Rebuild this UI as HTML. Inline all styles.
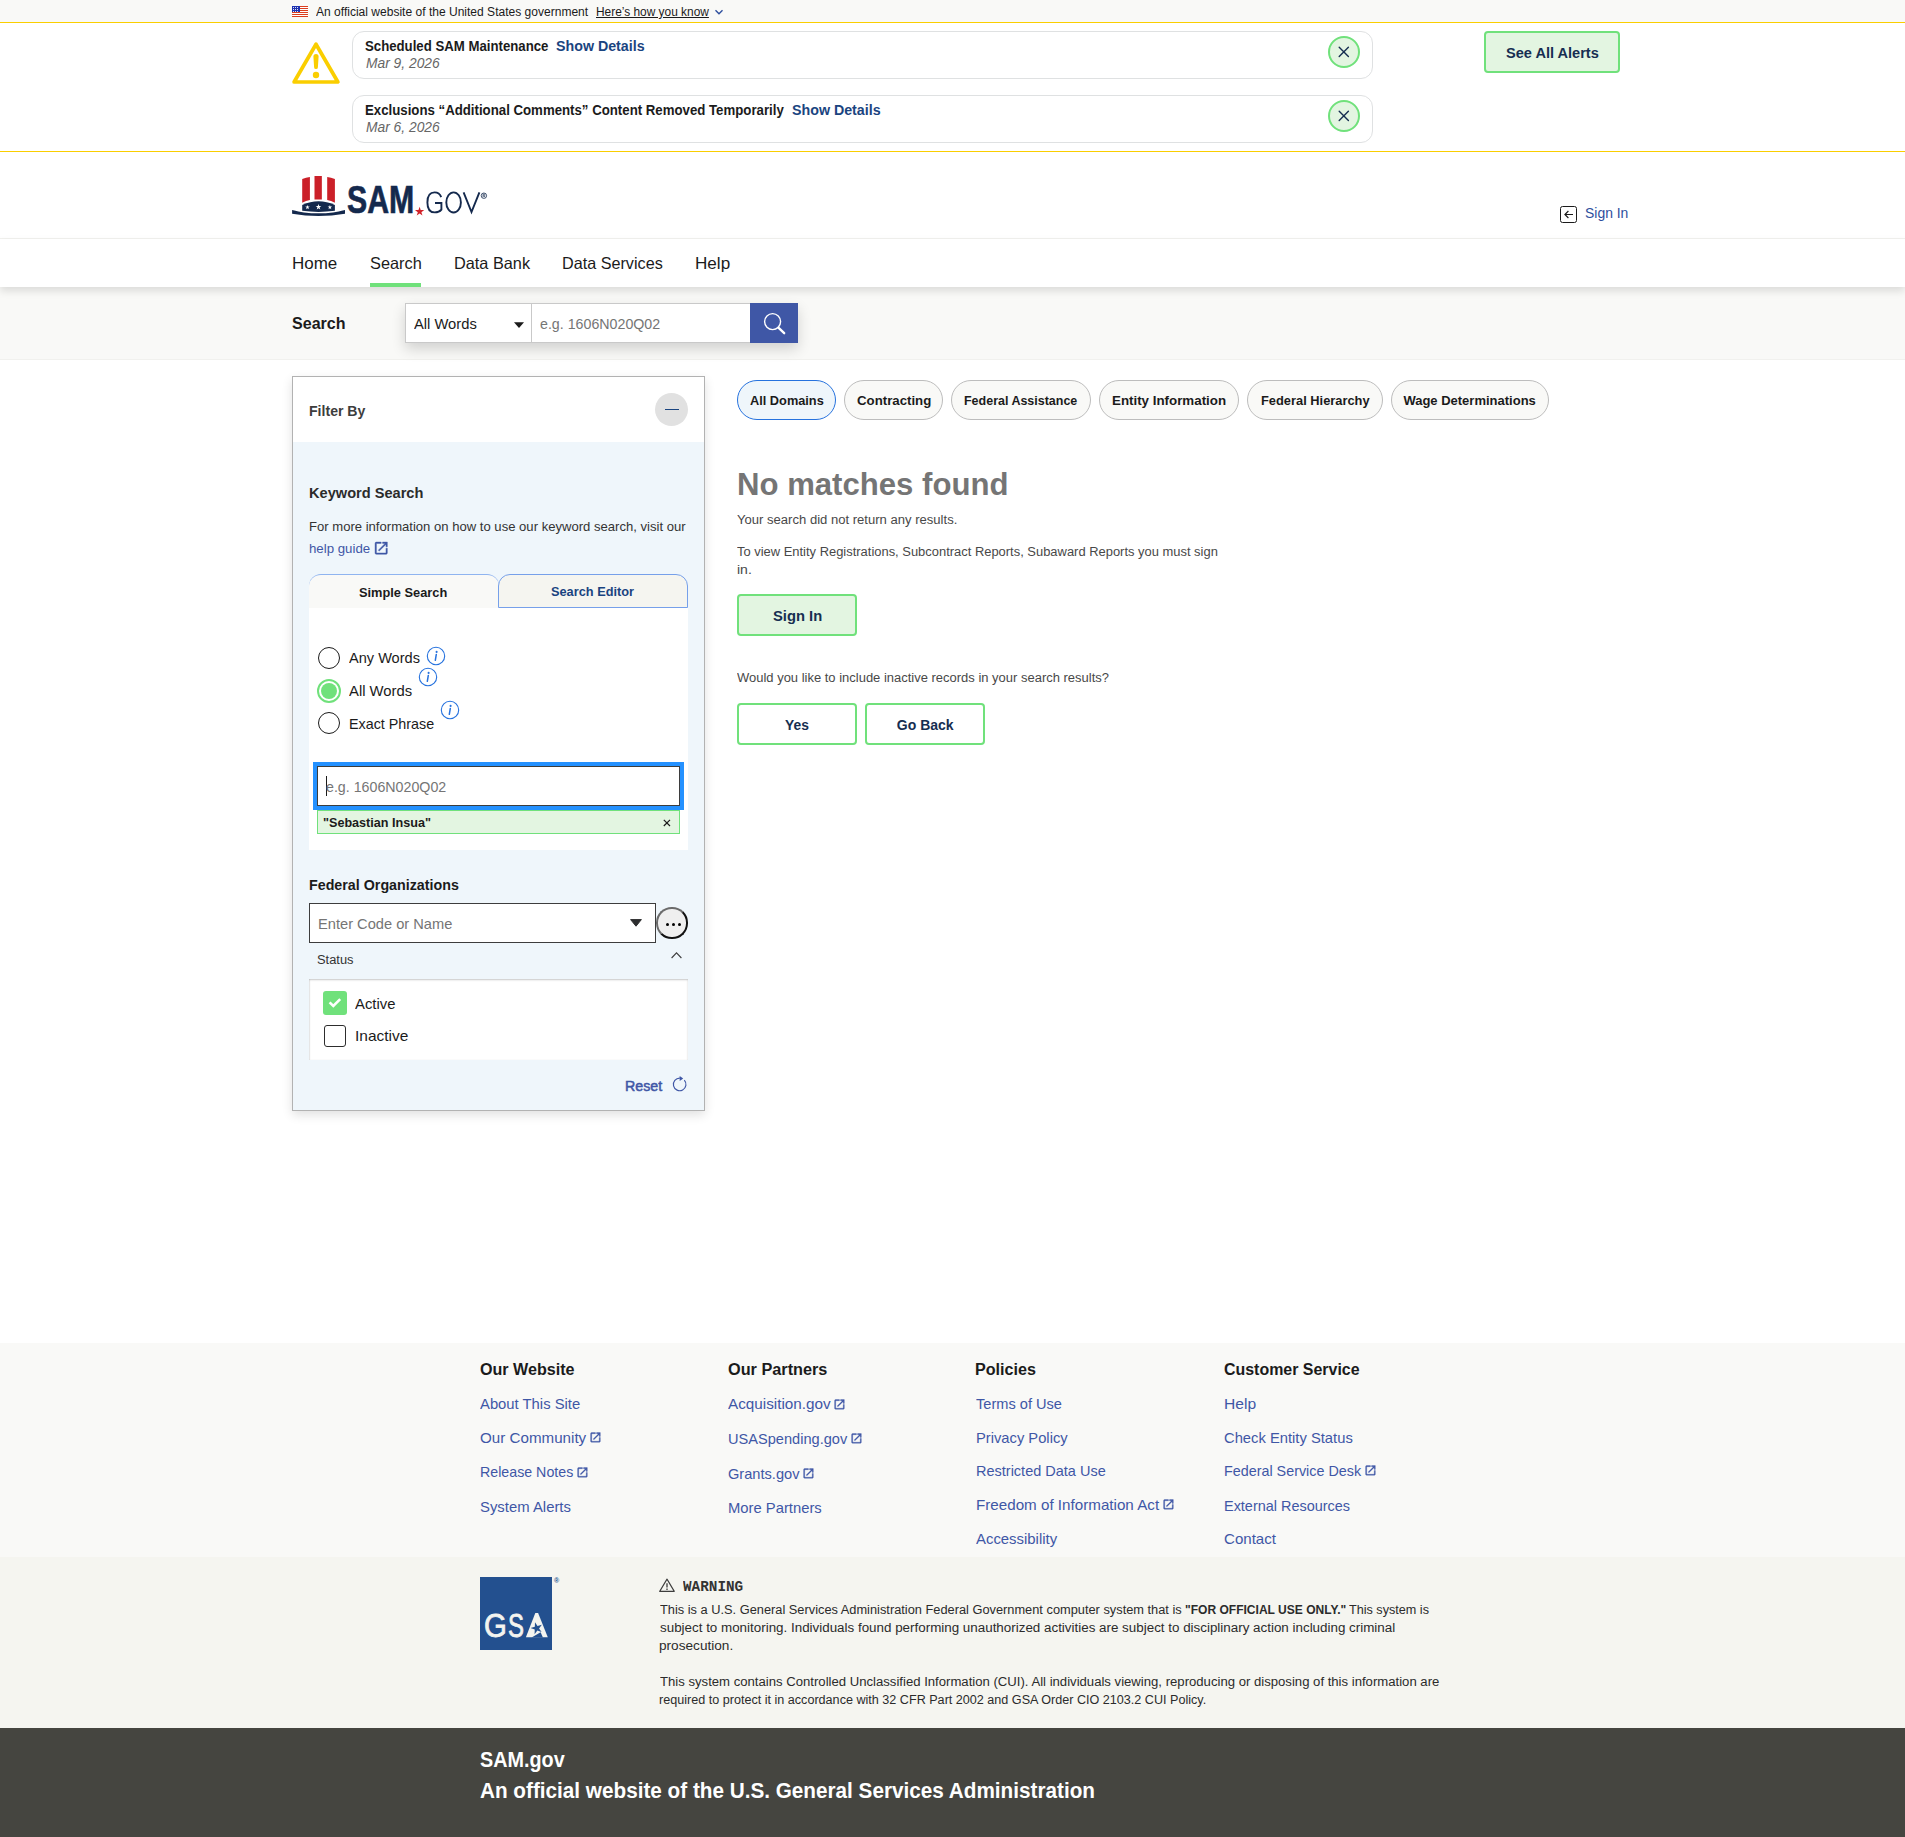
<!DOCTYPE html>
<html lang="en"><head><meta charset="utf-8"><title>SAM.gov | Search</title><style>
*{box-sizing:border-box;margin:0;padding:0}
html,body{width:1905px;height:1837px;overflow:hidden;background:#fff}
body{position:relative;font-family:"Liberation Sans",sans-serif;color:#1b1b1b;font-size:16px}
.b{position:absolute;display:block}
.t{position:absolute;display:block;white-space:nowrap;line-height:1;transform-origin:0 0}
</style></head>
<body>
<header>
<div class="b" style="left:0px;top:0px;width:1905px;height:22px;background:#f9f9f7"></div>
<div class="b" style="left:0px;top:22px;width:1905px;height:1px;background:#face00"></div>
<svg class="b" style="left:292px;top:6px" width="16" height="11" viewBox="0 0 16 11" shape-rendering="crispEdges"><rect width="16" height="11" fill="#fff"/><rect y="0" width="16" height="1" fill="#db3e1f"/><rect y="2" width="16" height="1" fill="#db3e1f"/><rect y="4" width="16" height="1" fill="#db3e1f"/><rect y="6" width="16" height="1" fill="#db3e1f"/><rect y="8" width="16" height="1" fill="#db3e1f"/><rect y="10" width="16" height="1" fill="#db3e1f"/><rect width="8" height="6" fill="#1e33b1"/><rect x="1" y="1" width="1" height="1" fill="#fff" opacity=".85"/><rect x="3" y="1" width="1" height="1" fill="#fff" opacity=".85"/><rect x="5" y="1" width="1" height="1" fill="#fff" opacity=".85"/><rect x="1" y="3" width="1" height="1" fill="#fff" opacity=".85"/><rect x="3" y="3" width="1" height="1" fill="#fff" opacity=".85"/><rect x="5" y="3" width="1" height="1" fill="#fff" opacity=".85"/><rect x="1" y="5" width="1" height="1" fill="#fff" opacity=".85"/><rect x="3" y="5" width="1" height="1" fill="#fff" opacity=".85"/><rect x="5" y="5" width="1" height="1" fill="#fff" opacity=".85"/></svg>
<span class="t" style="left:315.87px;top:6px;font-size:12px;transform:scaleX(1.0033);">An official website of the United States government</span>
<span class="t" style="left:595.92px;top:6px;font-size:12px;transform:scaleX(0.9917);text-decoration:underline;text-underline-offset:0.8px;">Here’s how you know</span>
<svg class="b" style="left:714px;top:8px" width="10" height="8" viewBox="0 0 10 8"><path d="M1.5 2.2 5 5.7 8.5 2.2" fill="none" stroke="#2e4f9e" stroke-width="1.4"/></svg>
<div class="b" style="left:0px;top:151px;width:1905px;height:1px;background:#face00"></div>
<svg class="b" style="left:290px;top:40px" width="52" height="46" viewBox="0 0 52 46"><path d="M26 4.2 47.9 42H4.1Z" fill="none" stroke="#face00" stroke-width="3.7" stroke-linejoin="round"/><path d="M23.4 16.6a2.6 2.6 0 0 1 5.2 0l-.7 10.6a1.9 1.9 0 0 1-3.8 0z" fill="#face00"/><circle cx="26" cy="35" r="3.2" fill="#face00"/></svg>
<div class="b" style="left:352px;top:31px;width:1021px;height:48px;border:1px solid #dfe1e2;border-radius:12px;background:#fff"></div>
<span class="t" style="left:365.17px;top:39px;font-size:14px;transform:scaleX(0.9429);font-weight:700;">Scheduled SAM Maintenance</span>
<a class="t" style="left:556.32px;top:39px;font-size:14px;transform:scaleX(1.0169);font-weight:700;color:#1a4480;">Show Details</a>
<span class="t" style="left:365.77px;top:56px;font-size:14px;transform:scaleX(0.9863);font-style:italic;color:#666;">Mar 9, 2026</span>
<div class="b" style="left:1328px;top:36px;width:32px;height:32px;border:2px solid #70e17b;border-radius:50%;background:#e3f5e1"></div>
<svg class="b" style="left:1337px;top:45px" width="14" height="14" viewBox="0 0 14 14"><path d="M2.2 2.2 11.4 11.4M11.4 2.2 2.2 11.4" stroke="#162e51" stroke-width="1.4" stroke-linecap="round"/></svg>
<div class="b" style="left:352px;top:95px;width:1021px;height:48px;border:1px solid #dfe1e2;border-radius:12px;background:#fff"></div>
<span class="t" style="left:365.31px;top:103px;font-size:14px;transform:scaleX(0.9450);font-weight:700;">Exclusions “Additional Comments” Content Removed Temporarily</span>
<a class="t" style="left:791.64px;top:103px;font-size:14px;transform:scaleX(1.0169);font-weight:700;color:#1a4480;">Show Details</a>
<span class="t" style="left:365.77px;top:120px;font-size:14px;transform:scaleX(0.9863);font-style:italic;color:#666;">Mar 6, 2026</span>
<div class="b" style="left:1328px;top:100px;width:32px;height:32px;border:2px solid #70e17b;border-radius:50%;background:#e3f5e1"></div>
<svg class="b" style="left:1337px;top:109px" width="14" height="14" viewBox="0 0 14 14"><path d="M2.2 2.2 11.4 11.4M11.4 2.2 2.2 11.4" stroke="#162e51" stroke-width="1.4" stroke-linecap="round"/></svg>
<div class="b" style="left:1484px;top:31px;width:136px;height:42px;border:2px solid #70e17b;border-radius:4px;background:#e3f5e1"></div>
<span class="t" style="left:1506.11px;top:46px;font-size:14px;transform:scaleX(1.0398);font-weight:700;color:#162e51;">See All Alerts</span>
<div class="b" style="left:0px;top:238px;width:1905px;height:1px;background:#f2f2ef"></div>
<svg class="b" style="left:288px;top:170px" width="204" height="50" viewBox="288 170 204 50"><path d="M302.2 179 Q306 177.6 309.9 177 V200 Q306 200.9 302.2 202.7Z" fill="#cb2029"/><path d="M314.5 176.1 H321.85 V199.6 Q318.2 199.3 314.5 199.6Z" fill="#cb2029"/><path d="M327.2 177 Q331 177.6 334.9 179 V202.7 Q331 200.9 327.2 200Z" fill="#cb2029"/><path d="M302.2 205 Q318.5 197.5 334.9 205 V210.8 Q318.5 213 302.2 210.8Z" fill="#14294d"/><path d="M292.1 209.9 C297 211 300 211.8 304 212.4 Q318.5 214.2 333 212.4 C337 211.8 340 211 345 209.9 V213.75 Q318.5 218.2 292.1 213.75Z" fill="#14294d"/><path transform="translate(307.5 207.3) scale(2.4)" d="M0-1 .225-.309H.951L.363.118.588.809 0 .382-.588.809-.363.118-.951-.309H-.225Z" fill="#fff"/><path transform="translate(318.5 207.0) scale(3.0)" d="M0-1 .225-.309H.951L.363.118.588.809 0 .382-.588.809-.363.118-.951-.309H-.225Z" fill="#fff"/><path transform="translate(329.9 207.3) scale(2.4)" d="M0-1 .225-.309H.951L.363.118.588.809 0 .382-.588.809-.363.118-.951-.309H-.225Z" fill="#fff"/><path transform="translate(419.6 211.6) scale(4.9)" d="M0-1 .225-.309H.951L.363.118.588.809 0 .382-.588.809-.363.118-.951-.309H-.225Z" fill="#d2232a"/><g fill="none" stroke="#14294d" stroke-width="1.9"><path d="M441.2 197.1 Q439.4 192.4 434.6 192.4 Q427.4 192.4 427.4 202.4 Q427.4 212.4 434.8 212.4 Q439.2 212.4 441.4 209.6 V203 H435"/><ellipse cx="453.6" cy="202.4" rx="7.3" ry="10.05"/><path d="M463.6 192.3 471.5 212 479.4 192.3"/></g><circle cx="483.9" cy="195.7" r="2.7" fill="none" stroke="#14294d" stroke-width="0.8"/><path d="M483 197.2v-3h1.1c.65 0 1 .35 1 .85s-.35.85-1 .85h-1.1m1.1 0 .95 1.3" fill="none" stroke="#14294d" stroke-width="0.65"/></svg>
<span class="t" style="left:347.24px;top:181px;font-size:38.3px;transform:scaleX(0.7892);font-weight:700;color:#14294d;-webkit-text-stroke:0.7px #14294d;">SAM</span>
<div class="b" style="left:1560px;top:206px;width:17px;height:17px;border:1.3px solid #1b1b1b;border-radius:2.5px"></div>
<svg class="b" style="left:1563px;top:209px" width="12" height="11" viewBox="0 0 12 11"><path d="M10 5.5H2.2M5.4 2 1.9 5.5 5.4 9" fill="none" stroke="#1b1b1b" stroke-width="1.15"/></svg>
<a class="t" style="left:1585.01px;top:206px;font-size:14.5px;transform:scaleX(0.9603);color:#2e4f9e;">Sign In</a>
</header><nav>
<div class="b" style="left:0px;top:239px;width:1905px;height:48px;background:#fff;box-shadow:0 4px 8px rgba(0,0,0,.12);z-index:3"></div>
<a class="t" style="left:292.43px;top:255px;font-size:16.5px;transform:scaleX(1.0290);z-index:4;">Home</a>
<a class="t" style="left:370.03px;top:255px;font-size:16.5px;transform:scaleX(0.9893);z-index:4;">Search</a>
<a class="t" style="left:453.75px;top:255px;font-size:16.5px;transform:scaleX(0.9870);z-index:4;">Data Bank</a>
<a class="t" style="left:562.26px;top:255px;font-size:16.5px;transform:scaleX(0.9809);z-index:4;">Data Services</a>
<a class="t" style="left:695.18px;top:255px;font-size:16.5px;transform:scaleX(1.0358);z-index:4;">Help</a>
<div class="b" style="left:370px;top:283px;width:51px;height:4px;background:#70e17b;z-index:4"></div>
</nav><section>
<div class="b" style="left:0px;top:287px;width:1905px;height:73px;background:#f9f9f7;border-bottom:1px solid #f1f1ee"></div>
<span class="t" style="left:291.88px;top:316px;font-size:16px;transform:scaleX(1.0032);font-weight:700;">Search</span>
<div class="b" style="left:405px;top:303px;width:393px;height:40px;box-shadow:0 6px 14px rgba(0,0,0,.16)"></div>
<div class="b" style="left:405px;top:303px;width:127px;height:40px;background:#fff;border:1px solid #c9c9c9"></div>
<div class="b" style="left:531px;top:303px;width:220px;height:40px;background:#fff;border:1px solid #c9c9c9"></div>
<span class="t" style="left:414.32px;top:316px;font-size:15px;transform:scaleX(0.9827);">All Words</span>
<svg class="b" style="left:513px;top:321px" width="12" height="8" viewBox="0 0 12 8"><path d="M1 1.2h10L6 7Z" fill="#1b1b1b"/></svg>
<span class="t" style="left:539.85px;top:316px;font-size:15px;transform:scaleX(0.9481);color:#757575;">e.g. 1606N020Q02</span>
<div class="b" style="left:750px;top:303px;width:48px;height:40px;background:#3f57a6"></div>
<svg class="b" style="left:750px;top:303px" width="48" height="40" viewBox="750 303 48 40"><circle cx="772.6" cy="321.6" r="8" fill="none" stroke="#fff" stroke-width="1.4"/><path d="M778.4 327.6 784.2 333.2" stroke="#fff" stroke-width="2.3" stroke-linecap="round"/></svg>
</section>
<main><aside>
<div class="b" style="left:292px;top:376px;width:413px;height:735px;background:#eff6fb;border:1px solid #b2b2b2;box-shadow:0 4px 10px rgba(0,0,0,.12)"></div>
<div class="b" style="left:293px;top:377px;width:411px;height:65px;background:#fff"></div>
<h2 class="t" style="left:309.18px;top:403px;font-size:15px;transform:scaleX(0.9396);font-weight:700;color:#3d3d3d;">Filter By</h2>
<div class="b" style="left:655px;top:393px;width:33px;height:33px;background:#e1e1e1;border-radius:50%"></div>
<div class="b" style="left:665px;top:408.5px;width:14px;height:1.2px;background:#1a4480"></div>
<span class="t" style="left:309.25px;top:485px;font-size:15px;transform:scaleX(0.9731);font-weight:700;color:#2b2b2b;">Keyword Search</span>
<span class="t" style="left:309.10px;top:520px;font-size:13px;transform:scaleX(1.0061);color:#333;">For more information on how to use our keyword search, visit our</span>
<a class="t" style="left:309.11px;top:542px;font-size:13px;transform:scaleX(1.0196);color:#3f57a6;">help guide</a>
<svg class="b" style="left:372.85px;top:540.35px" width="16.40" height="16.40" viewBox="0 0 24 24"><path fill="#3f57a6" stroke="#3f57a6" stroke-width=".6" d="M19 19H5V5h7V3H5a2 2 0 0 0-2 2v14a2 2 0 0 0 2 2h14c1.1 0 2-.9 2-2v-7h-2v7zM14 3v2h3.59l-9.83 9.83 1.41 1.41L19 6.41V10h2V3h-7z"/></svg>
<div class="b" style="left:309px;top:574px;width:190px;height:35px;background:#f9f9f7;border-top:1px solid #8fb4f0;border-radius:12px 12px 0 0"></div>
<div class="b" style="left:498px;top:574px;width:190px;height:34px;background:#f5f5f0;border:1px solid #76a0ea;border-radius:12px 12px 0 0"></div>
<span class="t" style="left:359.46px;top:586px;font-size:13.5px;transform:scaleX(0.9479);font-weight:700;">Simple Search</span>
<span class="t" style="left:551.27px;top:585px;font-size:13.5px;transform:scaleX(0.9458);font-weight:700;color:#1a4480;">Search Editor</span>
<div class="b" style="left:309px;top:608px;width:379px;height:242px;background:#fff"></div>
<div class="b" style="left:318px;top:647px;width:22px;height:22px;border:1.6px solid #1b1b1b;border-radius:50%;background:#fff"></div>
<div class="b" style="left:317px;top:679px;width:24px;height:24px;border:2px solid #70e17b;border-radius:50%;background:#fff"></div>
<div class="b" style="left:321px;top:683px;width:16px;height:16px;border-radius:50%;background:#70e17b"></div>
<div class="b" style="left:318px;top:712px;width:22px;height:22px;border:1.6px solid #1b1b1b;border-radius:50%;background:#fff"></div>
<span class="t" style="left:349.14px;top:651px;font-size:14.5px;transform:scaleX(1.0043);">Any Words</span>
<span class="t" style="left:348.79px;top:684px;font-size:14.5px;transform:scaleX(1.0217);">All Words</span>
<span class="t" style="left:348.68px;top:717px;font-size:14.5px;transform:scaleX(0.9870);">Exact Phrase</span>
<svg class="b" style="left:426.2px;top:646.2px" width="20" height="20" viewBox="0 0 20 20"><circle cx="10" cy="10" r="8.7" fill="none" stroke="#2672de" stroke-width="1.1"/><circle cx="10.6" cy="5.9" r="1.05" fill="#2672de"/><path d="M10.3 8.4 9.3 14.3" stroke="#2672de" stroke-width="1.5" stroke-linecap="round"/></svg>
<svg class="b" style="left:418.1px;top:667.2px" width="20" height="20" viewBox="0 0 20 20"><circle cx="10" cy="10" r="8.7" fill="none" stroke="#2672de" stroke-width="1.1"/><circle cx="10.6" cy="5.9" r="1.05" fill="#2672de"/><path d="M10.3 8.4 9.3 14.3" stroke="#2672de" stroke-width="1.5" stroke-linecap="round"/></svg>
<svg class="b" style="left:440.1px;top:700.1px" width="20" height="20" viewBox="0 0 20 20"><circle cx="10" cy="10" r="8.7" fill="none" stroke="#2672de" stroke-width="1.1"/><circle cx="10.6" cy="5.9" r="1.05" fill="#2672de"/><path d="M10.3 8.4 9.3 14.3" stroke="#2672de" stroke-width="1.5" stroke-linecap="round"/></svg>
<div class="b" style="left:313px;top:762px;width:371px;height:48px;background:#2491ff"></div>
<div class="b" style="left:317px;top:766px;width:363px;height:40px;background:#fff;border:1px solid #3d3d3d"></div>
<div class="b" style="left:326px;top:776px;width:1px;height:20px;background:#1b1b1b"></div>
<span class="t" style="left:325.69px;top:779px;font-size:15px;transform:scaleX(0.9487);color:#757575;">e.g. 1606N020Q02</span>
<div class="b" style="left:317px;top:810px;width:363px;height:24px;background:#e3f5e1;border:1px solid #70e17b"></div>
<span class="t" style="left:323.01px;top:816px;font-size:13px;transform:scaleX(0.9694);font-weight:700;">"Sebastian Insua"</span>
<svg class="b" style="left:662px;top:818px" width="10" height="10" viewBox="0 0 10 10"><path d="M1.8 1.8 8 8M8 1.8 1.8 8" stroke="#1b1b1b" stroke-width="1.2"/></svg>
<span class="t" style="left:308.86px;top:877px;font-size:15px;transform:scaleX(0.9513);font-weight:700;">Federal Organizations</span>
<div class="b" style="left:309px;top:903px;width:347px;height:40px;background:#fff;border:1px solid #3d3d3d"></div>
<span class="t" style="left:318.40px;top:916px;font-size:15px;transform:scaleX(0.9764);color:#757575;">Enter Code or Name</span>
<svg class="b" style="left:629px;top:918px" width="14" height="10" viewBox="0 0 14 10"><path d="M1.6 1.6h10.8L7 8.2Z" fill="#2d2e2f" stroke="#2d2e2f" stroke-width="1" stroke-linejoin="round"/></svg>
<div class="b" style="left:656.4px;top:907.2px;width:31.5px;height:31.5px;background:#efefef;border:2px solid #1b1b1b;border-color:#6b6b6b #111 #111 #6b6b6b;border-radius:50%"></div>
<div class="b" style="left:665.6999999999999px;top:922.6px;width:3.2px;height:3.2px;background:#000;border-radius:50%"></div>
<div class="b" style="left:671.6999999999999px;top:922.6px;width:3.2px;height:3.2px;background:#000;border-radius:50%"></div>
<div class="b" style="left:677.6999999999999px;top:922.6px;width:3.2px;height:3.2px;background:#000;border-radius:50%"></div>
<span class="t" style="left:317.30px;top:954px;font-size:12.5px;transform:scaleX(1.0309);color:#333;">Status</span>
<svg class="b" style="left:669px;top:950px" width="15" height="10" viewBox="0 0 15 10"><path d="M2.6 8 7.5 2.9 12.4 8" fill="none" stroke="#3d3d3d" stroke-width="1.1"/></svg>
<div class="b" style="left:309px;top:979px;width:379px;height:81px;background:#fff;box-shadow:inset 0 1px 2px rgba(0,0,0,.22),inset 1px 0 1px rgba(0,0,0,.05)"></div>
<div class="b" style="left:323px;top:991px;width:24px;height:24px;background:#70e17b;border-radius:3px"></div>
<svg class="b" style="left:323px;top:991px" width="24" height="24" viewBox="0 0 24 24"><path d="M6.6 11.4 10.3 14.9 17.2 8.1" fill="none" stroke="#fff" stroke-width="2.6"/></svg>
<div class="b" style="left:324px;top:1025px;width:22px;height:22px;background:#fff;border:1.6px solid #2d2d2d;border-radius:3px"></div>
<span class="t" style="left:355.05px;top:996px;font-size:15px;transform:scaleX(0.9900);">Active</span>
<span class="t" style="left:354.78px;top:1028px;font-size:15px;transform:scaleX(1.0312);">Inactive</span>
<span class="t" style="left:625.33px;top:1079px;font-size:14.5px;transform:scaleX(0.9807);color:#3f57a6;-webkit-text-stroke:0.5px #3f57a6;">Reset</span>
<svg class="b" style="left:670px;top:1074px" width="20" height="20" viewBox="0 0 20 20"><path d="M14.3 6.1 A6.3 6.3 0 1 1 9.9 4.1" fill="none" stroke="#3f57a6" stroke-width="1.15"/><path d="M9.7 2 13.2 4.5 9.7 6.9Z" fill="#3f57a6"/></svg>
</aside><section>
<div class="b" style="left:737px;top:380px;width:99px;height:40px;border:1px solid #2672de;border-radius:20px;background:#eff6fb"></div>
<span class="t" style="left:750.03px;top:394px;font-size:13px;transform:scaleX(0.9820);font-weight:700;">All Domains</span>
<div class="b" style="left:844px;top:380px;width:99px;height:40px;border:1px solid #bdbdbd;border-radius:20px;background:#f9f9f7"></div>
<span class="t" style="left:856.71px;top:394px;font-size:13px;transform:scaleX(1.0183);font-weight:700;">Contracting</span>
<div class="b" style="left:951px;top:380px;width:140px;height:40px;border:1px solid #bdbdbd;border-radius:20px;background:#f9f9f7"></div>
<span class="t" style="left:964.15px;top:394px;font-size:13px;transform:scaleX(0.9599);font-weight:700;">Federal Assistance</span>
<div class="b" style="left:1099px;top:380px;width:140px;height:40px;border:1px solid #bdbdbd;border-radius:20px;background:#f9f9f7"></div>
<span class="t" style="left:1112.33px;top:394px;font-size:13px;transform:scaleX(1.0257);font-weight:700;">Entity Information</span>
<div class="b" style="left:1247px;top:380px;width:136px;height:40px;border:1px solid #bdbdbd;border-radius:20px;background:#f9f9f7"></div>
<span class="t" style="left:1260.50px;top:394px;font-size:13px;transform:scaleX(0.9887);font-weight:700;">Federal Hierarchy</span>
<div class="b" style="left:1391px;top:380px;width:158px;height:40px;border:1px solid #bdbdbd;border-radius:20px;background:#f9f9f7"></div>
<span class="t" style="left:1403.38px;top:394px;font-size:13px;font-weight:700;">Wage Determinations</span>
<h1 class="t" style="left:737.02px;top:469px;font-size:31px;transform:scaleX(1.0039);font-weight:700;color:#757575;">No matches found</h1>
<span class="t" style="left:736.87px;top:514px;font-size:12.5px;transform:scaleX(1.0453);color:#484848;">Your search did not return any results.</span>
<span class="t" style="left:737.30px;top:546px;font-size:12.5px;transform:scaleX(1.0345);color:#484848;">To view Entity Registrations, Subcontract Reports, Subaward Reports you must sign</span>
<span class="t" style="left:737.20px;top:564px;font-size:12.5px;transform:scaleX(1.1209);color:#484848;">in.</span>
<div class="b" style="left:737px;top:594px;width:120px;height:42px;border:2px solid #70e17b;border-radius:4px;background:#e3f5e1"></div>
<span class="t" style="left:772.62px;top:609px;font-size:14px;transform:scaleX(1.0533);font-weight:700;color:#162e51;">Sign In</span>
<span class="t" style="left:737.31px;top:672px;font-size:12.5px;transform:scaleX(1.0382);color:#484848;">Would you like to include inactive records in your search results?</span>
<div class="b" style="left:737px;top:703px;width:120px;height:42px;border:2px solid #70e17b;border-radius:4px;background:#fff"></div>
<div class="b" style="left:865px;top:703px;width:120px;height:42px;border:2px solid #70e17b;border-radius:4px;background:#fff"></div>
<span class="t" style="left:785.22px;top:718px;font-size:14px;transform:scaleX(0.9868);font-weight:700;color:#162e51;">Yes</span>
<span class="t" style="left:896.81px;top:718px;font-size:14px;font-weight:700;color:#162e51;">Go Back</span>
</section></main><footer>
<div class="b" style="left:0px;top:1343px;width:1905px;height:214px;background:#f9f9f7"></div>
<div class="b" style="left:0px;top:1557px;width:1905px;height:171px;background:#f5f5f0"></div>
<div class="b" style="left:0px;top:1728px;width:1905px;height:109px;background:#454540"></div>
<h3 class="t" style="left:479.73px;top:1362px;font-size:16px;transform:scaleX(1.0066);font-weight:700;">Our Website</h3>
<h3 class="t" style="left:727.57px;top:1362px;font-size:16px;transform:scaleX(1.0161);font-weight:700;">Our Partners</h3>
<h3 class="t" style="left:974.98px;top:1362px;font-size:16px;transform:scaleX(1.0067);font-weight:700;">Policies</h3>
<h3 class="t" style="left:1223.97px;top:1362px;font-size:16px;transform:scaleX(0.9965);font-weight:700;">Customer Service</h3>
<a class="t" style="left:480.00px;top:1396px;font-size:15px;transform:scaleX(0.9876);color:#3f57a6;">About This Site</a>
<a class="t" style="left:480.32px;top:1430px;font-size:15px;transform:scaleX(1.0110);color:#3f57a6;">Our Community</a>
<svg class="b" style="left:589.18px;top:1431.38px" width="12.93" height="12.93" viewBox="0 0 24 24"><path fill="#3f57a6" stroke="#3f57a6" stroke-width=".6" d="M19 19H5V5h7V3H5a2 2 0 0 0-2 2v14a2 2 0 0 0 2 2h14c1.1 0 2-.9 2-2v-7h-2v7zM14 3v2h3.59l-9.83 9.83 1.41 1.41L19 6.41V10h2V3h-7z"/></svg>
<a class="t" style="left:479.90px;top:1464px;font-size:15px;transform:scaleX(0.9480);color:#3f57a6;">Release Notes</a>
<svg class="b" style="left:575.68px;top:1465.98px" width="12.93" height="12.93" viewBox="0 0 24 24"><path fill="#3f57a6" stroke="#3f57a6" stroke-width=".6" d="M19 19H5V5h7V3H5a2 2 0 0 0-2 2v14a2 2 0 0 0 2 2h14c1.1 0 2-.9 2-2v-7h-2v7zM14 3v2h3.59l-9.83 9.83 1.41 1.41L19 6.41V10h2V3h-7z"/></svg>
<a class="t" style="left:480.31px;top:1499px;font-size:15px;transform:scaleX(0.9916);color:#3f57a6;">System Alerts</a>
<a class="t" style="left:728.25px;top:1396px;font-size:15px;transform:scaleX(1.0181);color:#3f57a6;">Acquisition.gov</a>
<svg class="b" style="left:832.98px;top:1397.68px" width="12.93" height="12.93" viewBox="0 0 24 24"><path fill="#3f57a6" stroke="#3f57a6" stroke-width=".6" d="M19 19H5V5h7V3H5a2 2 0 0 0-2 2v14a2 2 0 0 0 2 2h14c1.1 0 2-.9 2-2v-7h-2v7zM14 3v2h3.59l-9.83 9.83 1.41 1.41L19 6.41V10h2V3h-7z"/></svg>
<a class="t" style="left:728.21px;top:1431px;font-size:15px;transform:scaleX(0.9725);color:#3f57a6;">USASpending.gov</a>
<svg class="b" style="left:849.78px;top:1432.48px" width="12.93" height="12.93" viewBox="0 0 24 24"><path fill="#3f57a6" stroke="#3f57a6" stroke-width=".6" d="M19 19H5V5h7V3H5a2 2 0 0 0-2 2v14a2 2 0 0 0 2 2h14c1.1 0 2-.9 2-2v-7h-2v7zM14 3v2h3.59l-9.83 9.83 1.41 1.41L19 6.41V10h2V3h-7z"/></svg>
<a class="t" style="left:728.05px;top:1466px;font-size:15px;transform:scaleX(0.9744);color:#3f57a6;">Grants.gov</a>
<svg class="b" style="left:801.98px;top:1467.48px" width="12.93" height="12.93" viewBox="0 0 24 24"><path fill="#3f57a6" stroke="#3f57a6" stroke-width=".6" d="M19 19H5V5h7V3H5a2 2 0 0 0-2 2v14a2 2 0 0 0 2 2h14c1.1 0 2-.9 2-2v-7h-2v7zM14 3v2h3.59l-9.83 9.83 1.41 1.41L19 6.41V10h2V3h-7z"/></svg>
<a class="t" style="left:728.06px;top:1500px;font-size:15px;transform:scaleX(0.9863);color:#3f57a6;">More Partners</a>
<a class="t" style="left:975.88px;top:1396px;font-size:15px;transform:scaleX(0.9727);color:#3f57a6;">Terms of Use</a>
<a class="t" style="left:975.89px;top:1430px;font-size:15px;transform:scaleX(0.9816);color:#3f57a6;">Privacy Policy</a>
<a class="t" style="left:976.08px;top:1463px;font-size:15px;transform:scaleX(0.9665);color:#3f57a6;">Restricted Data Use</a>
<a class="t" style="left:976.07px;top:1497px;font-size:15px;transform:scaleX(1.0122);color:#3f57a6;">Freedom of Information Act</a>
<svg class="b" style="left:1161.78px;top:1498.48px" width="12.93" height="12.93" viewBox="0 0 24 24"><path fill="#3f57a6" stroke="#3f57a6" stroke-width=".6" d="M19 19H5V5h7V3H5a2 2 0 0 0-2 2v14a2 2 0 0 0 2 2h14c1.1 0 2-.9 2-2v-7h-2v7zM14 3v2h3.59l-9.83 9.83 1.41 1.41L19 6.41V10h2V3h-7z"/></svg>
<a class="t" style="left:975.99px;top:1531px;font-size:15px;transform:scaleX(0.9926);color:#3f57a6;">Accessibility</a>
<a class="t" style="left:1223.83px;top:1396px;font-size:15px;transform:scaleX(1.0407);color:#3f57a6;">Help</a>
<a class="t" style="left:1224.13px;top:1430px;font-size:15px;transform:scaleX(0.9837);color:#3f57a6;">Check Entity Status</a>
<a class="t" style="left:1224.15px;top:1463px;font-size:15px;transform:scaleX(0.9561);color:#3f57a6;">Federal Service Desk</a>
<svg class="b" style="left:1363.58px;top:1464.38px" width="12.93" height="12.93" viewBox="0 0 24 24"><path fill="#3f57a6" stroke="#3f57a6" stroke-width=".6" d="M19 19H5V5h7V3H5a2 2 0 0 0-2 2v14a2 2 0 0 0 2 2h14c1.1 0 2-.9 2-2v-7h-2v7zM14 3v2h3.59l-9.83 9.83 1.41 1.41L19 6.41V10h2V3h-7z"/></svg>
<a class="t" style="left:1224.05px;top:1498px;font-size:15px;transform:scaleX(0.9628);color:#3f57a6;">External Resources</a>
<a class="t" style="left:1223.85px;top:1531px;font-size:15px;transform:scaleX(1.0051);color:#3f57a6;">Contact</a>
<div class="b" style="left:480px;top:1577px;width:72px;height:73px;background:#23508f"></div>
<span class="t" style="left:483.85px;top:1609px;font-size:33px;transform:scaleX(0.8885);color:#f4f4ef;-webkit-text-stroke:0.8px #f4f4ef;">G</span>
<span class="t" style="left:508.15px;top:1609px;font-size:33px;transform:scaleX(0.7248);color:#f4f4ef;-webkit-text-stroke:0.8px #f4f4ef;">S</span>
<svg class="b" style="left:524px;top:1610px" width="26" height="30" viewBox="524 1610 26 30"><path d="M525.9 1637.2 535.3 1613h2.8L547.8 1637.2Z" fill="#f4f4ef"/><path d="M531.6 1637.4 540.6 1632.2 542.9 1637.4Z" fill="#23508f"/><path transform="translate(536.7 1628.3) rotate(-16) scale(6.2)" d="M0-1 .225-.309H.951L.363.118.588.809 0 .382-.588.809-.363.118-.951-.309H-.225Z" fill="#23508f"/></svg>
<span class="t" style="left:553.90px;top:1577px;font-size:7px;font-weight:700;color:#23508f;">®</span>
<svg class="b" style="left:658px;top:1577px" width="18" height="16" viewBox="0 0 18 16"><path d="M9 2.1 16.3 14.4H1.7Z" fill="none" stroke="#3d3d3d" stroke-width="1.1" stroke-linejoin="round"/><path d="M9 6.3v4.3M9 11.6v1.5" stroke="#3d3d3d" stroke-width="1.3"/></svg>
<span class="t" style="left:683.45px;top:1580px;font-size:14px;transform:scaleX(1.0235);font-weight:700;color:#333;font-family:'Liberation Mono',monospace;">WARNING</span>
<span class="t" style="left:660.31px;top:1604px;font-size:12.5px;transform:scaleX(1.0245);color:#2b2b2b;">This is a U.S. General Services Administration Federal Government computer system that is</span>
<span class="t" style="left:1184.99px;top:1604px;font-size:12.5px;transform:scaleX(0.9627);font-weight:700;color:#2b2b2b;">"FOR OFFICIAL USE ONLY."</span>
<span class="t" style="left:1349.18px;top:1604px;font-size:12.5px;transform:scaleX(1.0097);color:#2b2b2b;">This system is</span>
<span class="t" style="left:660.11px;top:1622px;font-size:12.5px;transform:scaleX(1.0710);color:#2b2b2b;">subject to monitoring. Individuals found performing unauthorized activities are subject to disciplinary action including criminal</span>
<span class="t" style="left:659.21px;top:1640px;font-size:12.5px;transform:scaleX(1.0902);color:#2b2b2b;">prosecution.</span>
<span class="t" style="left:660.31px;top:1676px;font-size:12.5px;transform:scaleX(1.0503);color:#2b2b2b;">This system contains Controlled Unclassified Information (CUI). All individuals viewing, reproducing or disposing of this information are</span>
<span class="t" style="left:659.07px;top:1694px;font-size:12.5px;transform:scaleX(1.0076);color:#2b2b2b;">required to protect it in accordance with 32 CFR Part 2002 and GSA Order CIO 2103.2 CUI Policy.</span>
<span class="t" style="left:479.63px;top:1749px;font-size:22px;transform:scaleX(0.8996);font-weight:700;color:#fff;">SAM.gov</span>
<span class="t" style="left:479.86px;top:1780px;font-size:22px;transform:scaleX(0.9414);font-weight:700;color:#fff;">An official website of the U.S. General Services Administration</span>
</footer>
</body></html>
